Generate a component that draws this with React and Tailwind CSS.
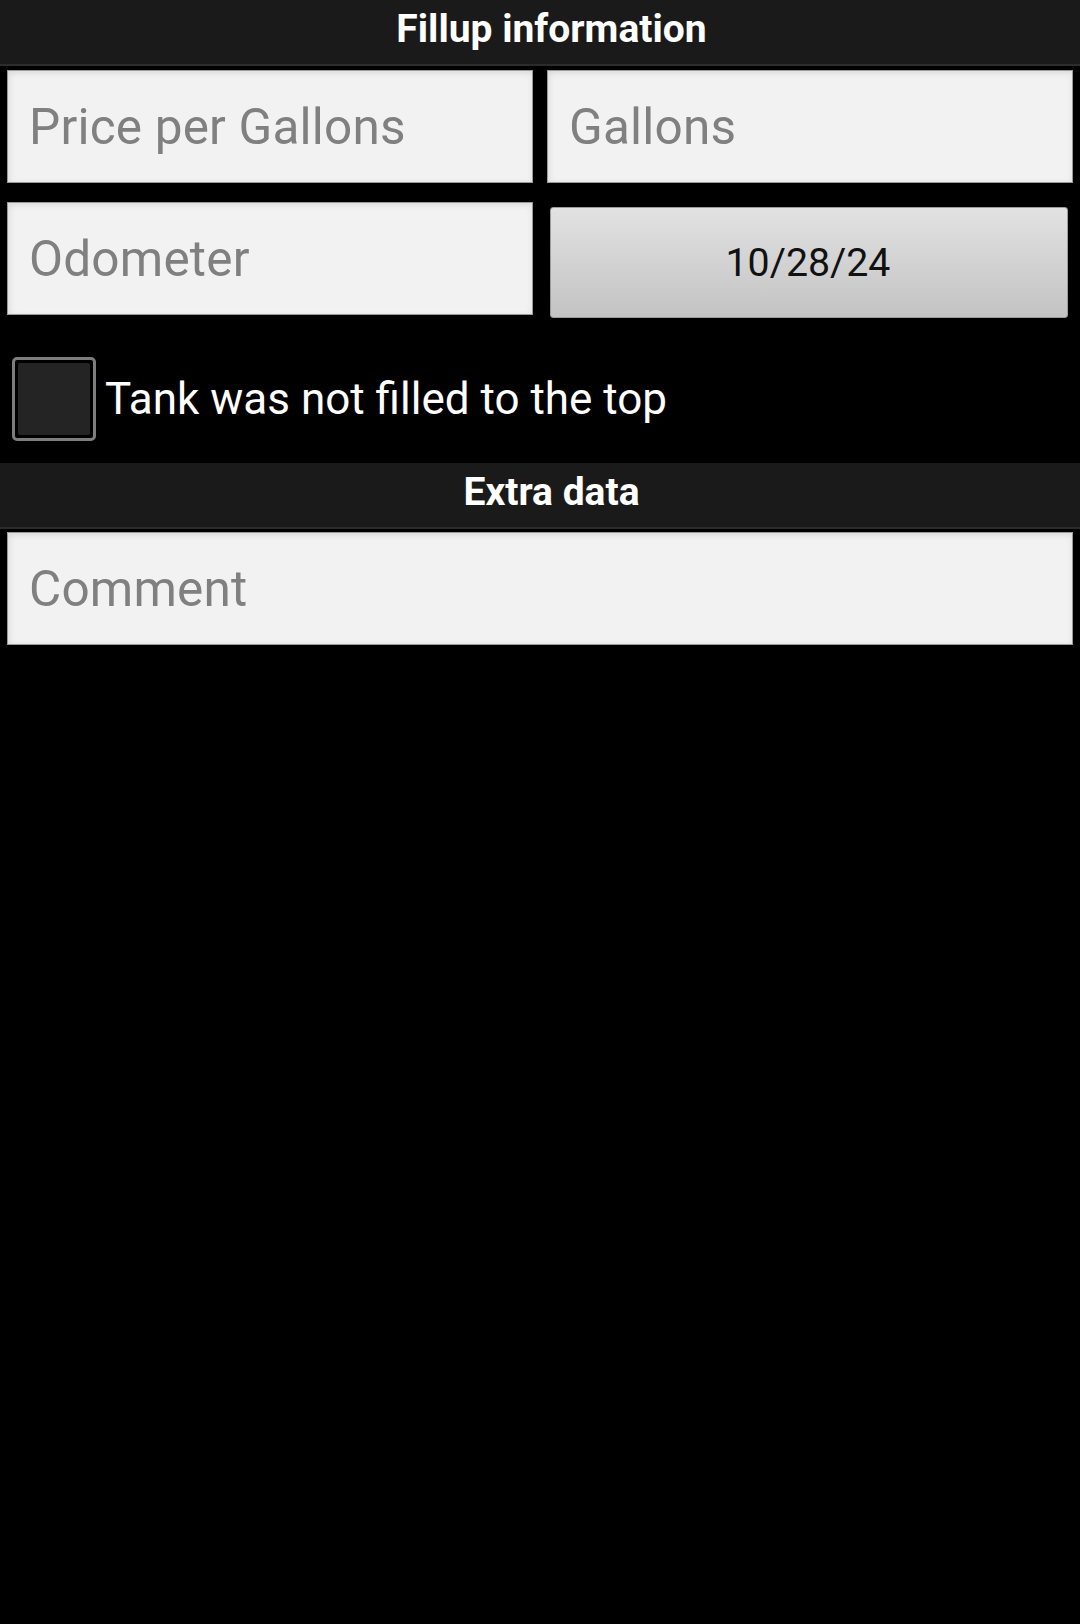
import React from "react";

function Field({ label, className = "" }) {
  return (
    <div
      className={
        "h-[113px] bg-[#f2f2f2] border border-[#9a9a9a] shadow-[inset_0_3px_6px_rgba(0,0,0,0.07),inset_3px_0_6px_rgba(0,0,0,0.04)] flex items-center pl-[21px] " +
        className
      }
    >
      <span className="text-[49.5px] leading-none text-[#808080] tracking-[0.2px] mt-[2px]">{label}</span>
    </div>
  );
}

function SectionHeader({ title }) {
  return (
    <div className="h-[66px] bg-[#1a1a1a] border-b-[2px] border-[#2c2c2c] flex items-center justify-center pl-[23px]">
      <span className="text-[39px] font-bold text-white leading-none -mt-[6px]">{title}</span>
    </div>
  );
}

export default function App() {
  return (
    <div
      className="w-[1080px] h-[1624px] bg-black overflow-hidden"
      style={{ fontFamily: "Roboto, 'Noto Sans', sans-serif" }}
    >
      <SectionHeader title="Fillup information" />
      <div className="px-[7px] pt-[4px] grid grid-cols-2 gap-x-[14px] gap-y-[19px]">
        <Field label="Price per Gallons" />
        <Field label="Gallons" />
        <Field label="Odometer" />
        <div className="pl-[3px] pr-[5px] pt-[5px]">
          <div className="h-[111px] rounded-[3px] border border-[#9c9c9c] bg-gradient-to-b from-[#e2e2e2] to-[#c3c3c3] flex items-center justify-center">
            <span className="text-[39.3px] leading-none text-[#111] mt-[2px] -ml-[2px]">10/28/24</span>
          </div>
        </div>
      </div>
      <div className="flex items-center pl-[12px] mt-[39px] h-[84px]">
        <div className="w-[84px] h-[84px] rounded-[5px] border-[3px] border-[#7d7d7d] bg-black p-[3px]">
          <div className="w-full h-full bg-[#242424] rounded-[2px]" />
        </div>
        <span className="ml-[9px] text-[44px] leading-none text-white">Tank was not filled to the top</span>
      </div>
      <div className="mt-[22px]">
        <SectionHeader title="Extra data" />
      </div>
      <div className="px-[7px] pt-[3px]">
        <Field label="Comment" />
      </div>
    </div>
  );
}
